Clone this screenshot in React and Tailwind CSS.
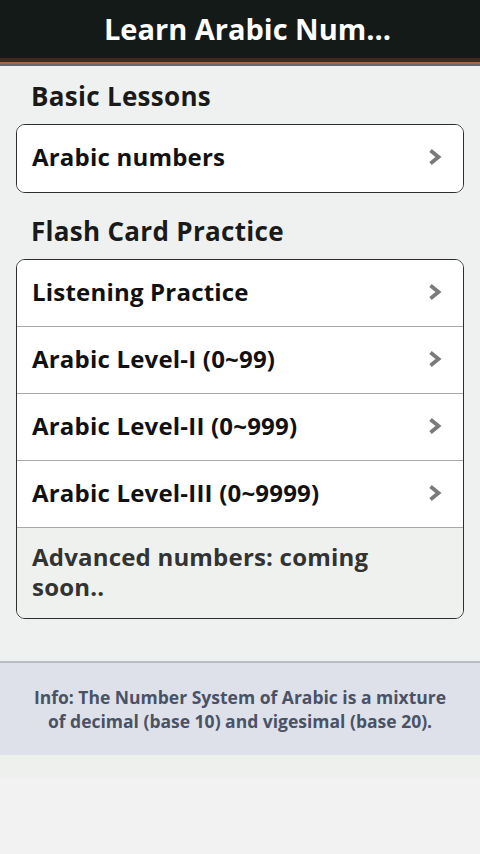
export default function App() {
  const font = { fontFamily: '"Open Sans", "Noto Sans", sans-serif' };
  const Chevron = () => (
    <svg width="16" height="20" viewBox="0 0 16 20" className="shrink-0">
      <path d="M3.5 3.5 L11.5 10 L3.5 16.5" fill="none" stroke="#7a7a7a" strokeWidth="3.8" strokeLinecap="butt" strokeLinejoin="miter" />
    </svg>
  );
  const Row = ({ label, last }) => (
    <div className={`flex items-center justify-between h-[67px] pl-[15px] pr-[20px] pb-[3px] bg-white ${last ? '' : 'border-b border-[#a8a8a8]'}`}>
      <span className="text-[24px] tracking-[0.2px] font-bold text-[#111]">{label}</span>
      <Chevron />
    </div>
  );
  return (
    <div className="w-[480px] h-[854px] flex flex-col bg-[#f2f2f2] overflow-hidden" style={font}>
      <div className="h-[58px] bg-[#141a18] flex items-center justify-center pl-[15px]">
        <span className="text-white text-[29px] font-bold">Learn Arabic Num...</span>
      </div>
      <div className="h-[4px] bg-[#3e2a1e]" />
      <div className="h-[2px] bg-[#a8683c]" />
      <div className="h-[2px] bg-[#66666c]" />
      <div className="bg-[#eef1ef] flex flex-col px-[16px] pb-[42px]">
        <div className="pl-[15px] pt-[11px] h-[58px] text-[26px] tracking-[0.3px] font-bold text-[#1a1a1a]">Basic Lessons</div>
        <div className="rounded-[9px] border border-[#2e2e2e] overflow-hidden">
          <Row label="Arabic numbers" last />
        </div>
        <div className="pl-[15px] pt-[19px] h-[66px] text-[26px] tracking-[0.3px] font-bold text-[#1a1a1a]">Flash Card Practice</div>
        <div className="rounded-[9px] border border-[#2e2e2e] overflow-hidden">
          <Row label="Listening Practice" />
          <Row label="Arabic Level-I (0~99)" />
          <Row label="Arabic Level-II (0~999)" />
          <Row label="Arabic Level-III (0~9999)" />
          <div className="border-t border-[#a8a8a8] -mt-px bg-[#eef1ee] pl-[15px] pr-[60px] pt-[14px] pb-[16px] text-[24px] tracking-[0.2px] leading-[30px] font-bold text-[#333]">
            Advanced numbers: coming soon..
          </div>
        </div>
      </div>
      <div className="bg-[#dfe1ea] border-t-2 border-[#b9bbc5] h-[94px] flex items-center justify-center px-[30px]">
        <p className="text-center text-[17.5px] leading-[24px] font-bold text-[#4a5266]">
          Info: The Number System of Arabic is a mixture of decimal (base 10) and vigesimal (base 20).
        </p>
      </div>
      <div className="h-[24px] bg-[#eef0ee]" />
      <div className="flex-1 bg-[#f2f2f2]" />
    </div>
  );
}
